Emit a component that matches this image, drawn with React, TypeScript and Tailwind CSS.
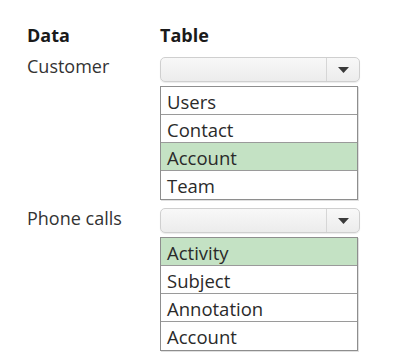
import React from 'react';

type Section = {
  label: string;
  options: string[];
  selected: string;
};

const sections: Section[] = [
  { label: 'Customer', options: ['Users', 'Contact', 'Account', 'Team'], selected: 'Account' },
  { label: 'Phone calls', options: ['Activity', 'Subject', 'Annotation', 'Account'], selected: 'Activity' },
];

function SelectBox() {
  return (
    <div className="flex h-[25px] w-[200px] rounded-[5px] border border-[#cfcfcf] bg-gradient-to-b from-[#f8f8f8] to-[#ececec] shadow-[0_1px_1px_rgba(0,0,0,0.08)]">
      <div className="flex-1" />
      <div className="flex w-[33px] items-center justify-center border-l border-[#d6d6d6]">
        <svg width="11" height="6" viewBox="0 0 11 6">
          <path d="M0 0 H11 L5.5 6 Z" fill="#3a3a3a" />
        </svg>
      </div>
    </div>
  );
}

export default function App() {
  return (
    <div
      className="min-h-screen bg-white pl-[27px] pt-[23px] text-[18px] text-[#2a2a2a]"
      style={{ fontFamily: '"Open Sans", "Noto Sans", sans-serif' }}
    >
      {/* Header */}
      <div className="flex leading-[24px] font-bold text-[#1a1a1a]">
        <div className="w-[133px]">Data</div>
        <div>Table</div>
      </div>

      {sections.map((s, i) => (
        <div key={s.label} className={`flex ${i === 0 ? 'mt-[7px]' : 'mt-[5px]'}`}>
          <div className={`w-[133px] leading-[24px] text-[#333] ${i === 0 ? '' : 'mt-[1px]'}`}>{s.label}</div>
          <div className="w-[200px]">
            <div className="mt-[3px]">
              <SelectBox />
            </div>
            <div className="mt-[4px] w-[198px] border border-[#8e8e8e] shadow-[1px_1px_0_rgba(0,0,0,0.12)]">
              {s.options.map((o, j) => (
                <div
                  key={o + j}
                  className={`h-[28px] px-[6px] pt-[2px] text-[18.5px] leading-[26px] text-[#2a2a2a] ${
                    j < s.options.length - 1 ? 'border-b border-[#9a9a9a]' : ''
                  } ${j === s.options.indexOf(s.selected) ? 'bg-[#c4e2c4]' : 'bg-white'}`}
                >
                  {o}
                </div>
              ))}
            </div>
          </div>
        </div>
      ))}
    </div>
  );
}
